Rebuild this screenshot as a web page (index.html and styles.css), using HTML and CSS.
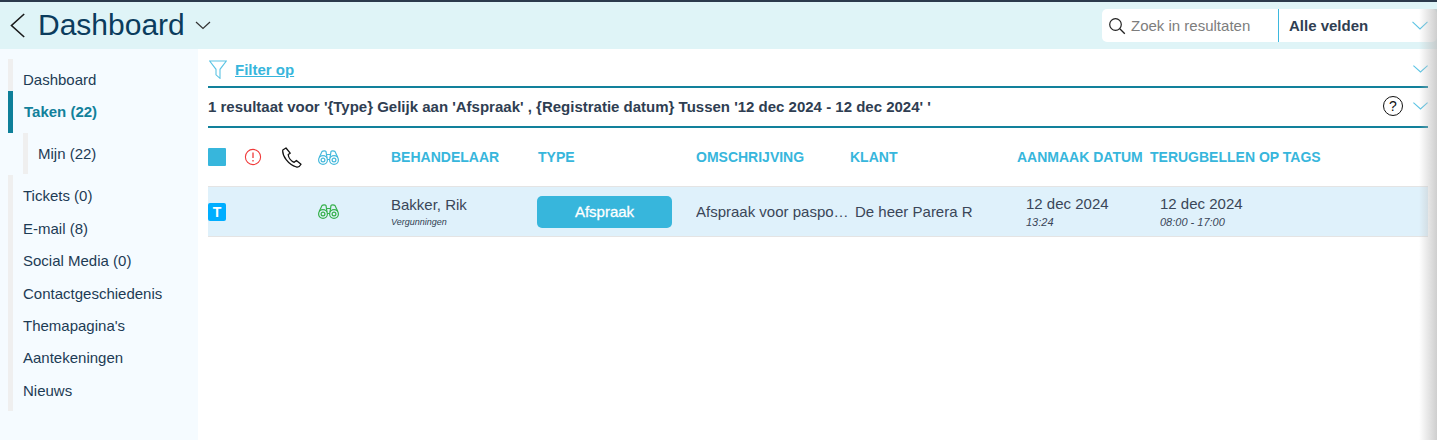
FILE: index.html
```html
<!DOCTYPE html>
<html lang="nl">
<head>
<meta charset="utf-8">
<title>Dashboard</title>
<link rel="stylesheet" href="styles.css">
</head>
<body>
<header class="topbar">
  <div class="title-group">
    <svg class="back" width="15" height="25" viewBox="0 0 15 25"><path d="M14.200 1 1.500 12.500 14.200 24" fill="none" stroke="#1a1a1a" stroke-width="1.600"/></svg>
    <h1 class="title">Dashboard</h1>
    <svg class="title-caret" width="16" height="9" viewBox="0 0 16 9"><path d="M1 1l7 6.500L15 1" fill="none" stroke="#333" stroke-width="1.200"/></svg>
  </div>
  <div class="search">
    <div class="search-input">
      <svg width="18" height="18" viewBox="0 0 18 18"><circle cx="7.500" cy="7.500" r="5.800" fill="none" stroke="#222" stroke-width="1.200"/><path d="M11.800 11.800l5 5" stroke="#222" stroke-width="1.300"/></svg>
      <span>Zoek in resultaten</span>
    </div>
    <div class="search-field">
      <span>Alle velden</span>
      <svg class="chev" width="16" height="9" viewBox="0 0 16 9"><path d="M.5.800 8 8 15.500.800" fill="none" stroke="#5cc4e4" stroke-width="1.100"/></svg>
    </div>
  </div>
</header>
<div class="layout">
  <nav class="sidebar">
    <a class="item first">Dashboard</a>
    <a class="item active">Taken (22)</a>
    <div class="sub"><a class="sub-item">Mijn (22)</a></div>
    <a class="item">Tickets (0)</a>
    <a class="item">E-mail (8)</a>
    <a class="item">Social Media (0)</a>
    <a class="item">Contactgeschiedenis</a>
    <a class="item">Themapagina's</a>
    <a class="item">Aantekeningen</a>
    <a class="item last">Nieuws</a>
  </nav>
  <main class="content">
    <div class="filter-bar">
      <div class="filter-left">
        <svg width="18" height="19" viewBox="0 0 18 19"><path d="M.7 1h16.600l-6.300 8.300v9l-4-3.500V9.300z" fill="none" stroke="#5cc4e4" stroke-width="1.100"/></svg>
        <a class="filter-link">Filter op</a>
      </div>
      <svg class="chev" width="15" height="8" viewBox="0 0 15 8"><path d="M.4.600 7.500 7 14.600.600" fill="none" stroke="#5cc4e4" stroke-width="1.100"/></svg>
    </div>
    <div class="result-bar">
      <span class="result-text">1 resultaat voor '{Type} Gelijk aan 'Afspraak' , {Registratie datum} Tussen '12 dec 2024 - 12 dec 2024' '</span>
      <div class="result-tools">
        <span class="help">?</span>
        <svg class="chev" width="15" height="8" viewBox="0 0 15 8"><path d="M.4.600 7.500 7 14.600.600" fill="none" stroke="#5cc4e4" stroke-width="1.100"/></svg>
      </div>
    </div>
    <div class="grid head">
      <div class="cell-check"><span class="checkbox"></span></div>
      <div class="cell-icon">
        <svg width="18" height="18" viewBox="0 0 18 18"><circle cx="9" cy="9" r="7.600" fill="none" stroke="#f03a3a" stroke-width="1.100"/><path d="M9 4.500v5.500M9 12v1.600" stroke="#f03a3a" stroke-width="1.300"/></svg>
      </div>
      <div class="cell-icon">
        <svg width="21" height="21" viewBox="0 0 21 21"><path d="M5 1 1.800 3C1 8.500 7 17.500 15.500 20c1.500.4 3.500-1 4.500-2.800l-4.600-3.700-2.200 1.800C10 14 7.400 10.500 7.200 7.500l2-1.300z" fill="none" stroke="#111" stroke-width="1.300" stroke-linejoin="round"/></svg>
      </div>
      <div class="cell-icon">
        <svg width="21" height="15" viewBox="0 0 21 15"><g fill="none" stroke="#45b9dc" stroke-width="1.200"><circle cx="5" cy="10" r="4.400"/><circle cx="5" cy="10" r="1.900"/><circle cx="16" cy="10" r="4.400"/><circle cx="16" cy="10" r="1.900"/><path d="M1.200 7.500 4 1.500 C5 .6 7.500.6 8 1.500L9 8M19.800 7.500 17 1.500C16 .6 13.500.6 13 1.500L12 8M9 9.500h3M8.500 4.500h4"/></g></svg>
      </div>
      <div>BEHANDELAAR</div>
      <div>TYPE</div>
      <div>OMSCHRIJVING</div>
      <div>KLANT</div>
      <div>AANMAAK DATUM</div>
      <div>TERUGBELLEN OP TAGS</div>
    </div>
    <div class="grid row">
      <div class="cell-check"><span class="badge">T</span></div>
      <div></div>
      <div></div>
      <div class="cell-icon">
        <svg width="21" height="15" viewBox="0 0 21 15"><g fill="none" stroke="#35b04a" stroke-width="1.200"><circle cx="5" cy="10" r="4.400"/><circle cx="5" cy="10" r="1.900"/><circle cx="16" cy="10" r="4.400"/><circle cx="16" cy="10" r="1.900"/><path d="M1.200 7.500 4 1.500 C5 .6 7.500.6 8 1.500L9 8M19.800 7.500 17 1.500C16 .6 13.500.6 13 1.500L12 8M9 9.500h3M8.500 4.500h4"/></g></svg>
      </div>
      <div class="stack">
        <span class="main-text">Bakker, Rik</span>
        <span class="tiny">Vergunningen</span>
      </div>
      <div><span class="pill">Afspraak</span></div>
      <div class="main-text ellipsis">Afspraak voor paspoort</div>
      <div class="main-text klant">De heer Parera R</div>
      <div class="stack date">
        <span class="main-text">12 dec 2024</span>
        <span class="small">13:24</span>
      </div>
      <div class="stack date">
        <span class="main-text">12 dec 2024</span>
        <span class="small">08:00 - 17:00</span>
      </div>
    </div>
  </main>
</div>
<div class="edge-shadow"></div>
</body>
</html>
```
FILE: styles.css
```css
* { box-sizing: border-box; }
html, body { height: 100%; }
body {
  margin: 0;
  height: 440px;
  overflow: hidden;
  position: relative;
  font-family: "Liberation Sans", Arial, sans-serif;
  color: #2f3e52;
  background: #fff;
}
.topbar {
  height: 49px;
  border-top: 2px solid #2b3a4c;
  background: #dff4f7;
  display: flex;
  justify-content: space-between;
  align-items: center;
  padding-left: 10px;
}
.title-group { display: flex; align-items: center; }
.title {
  margin: -2px 0 0 13px;
  font-size: 30px;
  font-weight: 400;
  line-height: 44px;
  color: #0b3c5d;
}
.title-caret { margin: 0 0 0 10px; }
.search {
  display: flex;
  align-items: stretch;
  width: 335px;
  height: 33px;
  background: #fff;
  border-radius: 5px;
}
.search-input {
  width: 177px;
  display: flex;
  align-items: center;
  gap: 5px;
  padding-left: 6px;
  font-size: 15px;
  color: #7d7d7d;
  border-right: 1px solid #3db8de;
}
.search-field {
  flex: 1;
  display: flex;
  align-items: center;
  justify-content: space-between;
  padding: 0 9px 0 10px;
  font-size: 15px;
  font-weight: 700;
  color: #2f3e52;
}
.layout { display: flex; height: 391px; }
.sidebar {
  width: 198px;
  flex: none;
  background: #f5fbff;
  padding: 10px 0 0 8px;
  font-size: 15px;
  color: #1d3b55;
}
.item {
  display: block;
  height: 32.470px;
  padding: 10px 0 0 10px;
  line-height: 22px;
  border-left: 5px solid #efefef;
}
.item.first { height: 32px; }
.item.active {
  height: 42px;
  font-weight: 700;
  padding-left: 11px;
  color: #12819b;
  border-left-color: #0e7f99;
}
.item.last { height: 41px; }
.sub { height: 42.100px; padding-left: 15px; }
.sub-item {
  display: block;
  height: 41px;
  padding: 10px 0 0 10px;
  line-height: 22px;
  border-left: 5px solid #efefef;
}
.content { flex: 1; padding-left: 10px; padding-right: 9px; min-width: 0; }
.filter-bar {
  height: 39px;
  display: flex;
  align-items: center;
  justify-content: space-between;
  padding-top: 3px;
  border-bottom: 2px solid #12819b;
}
.filter-left { display: flex; align-items: center; gap: 8px; padding-left: 1px; }
.filter-link {
  font-size: 15px;
  line-height: 20px;
  padding-top: 1px;
  font-weight: 700;
  color: #37b6dc;
  text-decoration: underline;
}
.result-bar {
  height: 40px;
  display: flex;
  align-items: center;
  justify-content: space-between;
  padding-bottom: 2px;
  border-bottom: 2px solid #12819b;
}
.result-text { font-size: 15px; font-weight: 700; color: #2f3e52; }
.result-tools { display: flex; align-items: center; gap: 10px; }
.help {
  width: 20px;
  height: 20px;
  border: 1.500px solid #111;
  border-radius: 50%;
  display: flex;
  align-items: center;
  justify-content: center;
  font-size: 14px;
  color: #111;
}
.grid {
  display: grid;
  grid-template-columns: 36px 37px 37px 73px 147px 158px 154px 167px 133px 1fr;
  align-items: center;
}
.head {
  height: 58px;
  font-size: 14px;
  font-weight: 700;
  color: #37b6dc;
}
.row {
  height: 51px;
  background: #dff1fb;
  border-top: 1px solid #e4e4e4;
  border-bottom: 1px solid #e4e4e4;
}
.cell-check { display: flex; }
.cell-icon { display: flex; }
.checkbox { width: 18px; height: 18px; background: #37b6dc; border-radius: 1px; }
.badge {
  width: 18px;
  height: 18px;
  background: #00aeff;
  color: #fff;
  border-radius: 2px;
  font-size: 14px;
  font-weight: 700;
  line-height: 18px;
  text-align: center;
}
.stack { display: flex; flex-direction: column; }
.main-text { font-size: 15px; color: #3a4658; line-height: 18px; }
.tiny { font-size: 9px; font-style: italic; color: #2f3e52; line-height: 12px; margin-top: 2px; }
.small { font-size: 11px; font-style: italic; color: #3a4658; line-height: 14px; margin-top: 2px; }
.date { padding-left: 9px; }
.date + .date { padding-left: 10px; }
.klant { padding-left: 5px; }
.pill {
  display: block;
  width: 135px;
  height: 32px;
  margin-left: -1px;
  background: #37b6dc;
  border-radius: 5px;
  color: #fff;
  font-size: 15px;
  font-weight: 400;
  line-height: 32px;
  text-align: center;
  -webkit-text-stroke: .3px #fff;
}
.ellipsis { white-space: nowrap; overflow: hidden; text-overflow: ellipsis; }
.edge-shadow {
  position: absolute;
  top: 9px;
  right: 0;
  bottom: 0;
  width: 18px;
  background: linear-gradient(to right, rgba(190,190,190,0), rgba(190,190,190,.75));
  pointer-events: none;
}
```
